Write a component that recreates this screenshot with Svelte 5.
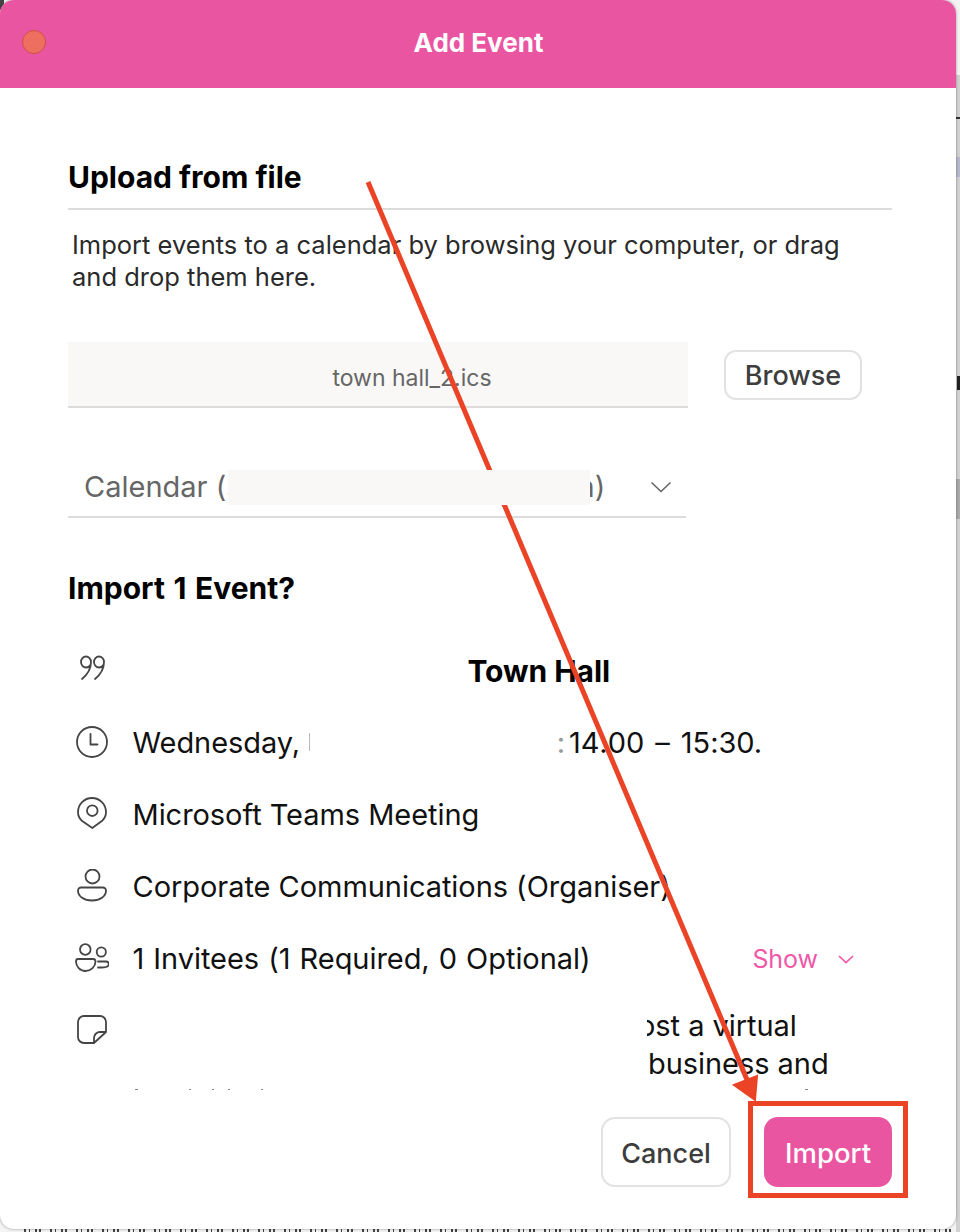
<script>
  const details = [
    { icon: "clock", text: "Wednesday,", rest: "14:00 – 15:30." },
    { icon: "pin", text: "Microsoft Teams Meeting" },
    { icon: "person", text: "Corporate Communications (Organiser)" },
  ];
</script>

<div class="page">
  <div class="window">
    <header class="titlebar">
      <span class="close"></span>
      <h1>Add Event</h1>
    </header>

    <main class="body">
      <h2 class="upload-title">Upload from file</h2>
      <p class="intro">Import events to a calendar by browsing your computer, or drag and drop them here.</p>

      <div class="file-row">
        <div class="file-name">town hall_2.ics</div>
        <button class="browse">Browse</button>
      </div>

      <div class="calendar">
        <span>Calendar (s</span>
        <span class="blur"></span>
        <span class="calendar-end">n)</span>
        <svg class="caret" width="22" height="12" viewBox="0 0 22 12" fill="none">
          <path d="M1.5 1.5 11 10.5 20.5 1.5" stroke="#666" stroke-width="1.6" />
        </svg>
      </div>

      <h2 class="import-title">Import 1 Event?</h2>

      <div class="rows">
        <div class="row">
          <svg class="icon" viewBox="0 0 34 34" fill="none" stroke="#454545" stroke-width="1.8" stroke-linecap="round">
            <path d="M16 9a5 5.500 0 1 0-5 5.500c2 0 3.500-1 4.300-2.500M16 9c0 7-3.500 12.500-9 17" />
            <path d="M29 9a5 5.500 0 1 0-5 5.500c2 0 3.500-1 4.300-2.500M29 9c0 7-3.500 12.500-9 17" />
          </svg>
          <strong class="event-title">Town Hall</strong>
        </div>

        {#each details as d}
          <div class="row">
            <svg class="icon" viewBox="0 0 34 34" fill="none" stroke="#454545" stroke-width="1.8" stroke-linecap="round" stroke-linejoin="round">
              {#if d.icon === "clock"}
                <circle cx="17" cy="17" r="15" />
                <path d="M15.500 9v10.500h7" />
              {:else if d.icon === "pin"}
                <path d="M17.300 31 6.800 23.700C4.300 21.500 3 18.500 3 15a14 14 0 0 1 28 0c0 3.500-1.300 6.500-3.800 8.700z" />
                <circle cx="17.300" cy="13.700" r="5.300" />
              {:else}
                <circle cx="17.500" cy="7.500" r="7" />
                <path d="M6 18.500h22a3 3 0 0 1 3 3c0 6-6 10-14 10s-14-4-14-10a3 3 0 0 1 3-3z" />
              {/if}
            </svg>
            <span>{d.text}</span>
            {#if d.rest}
              <span class="cut"></span>
              <span class="colon">:</span>
              <span class="time">{d.rest}</span>
            {/if}
          </div>
        {/each}

        <div class="row">
          <svg class="icon" viewBox="0 0 34 34" fill="none" stroke="#454545" stroke-width="1.8" stroke-linecap="round" stroke-linejoin="round">
            <circle cx="10.300" cy="8.500" r="5.300" />
            <path d="M3 18h15a2.500 2.500 0 0 1 2.500 2.500c0 5-4.500 9.500-10 9.500S1 25.500 1 20.500C1 19 1.800 18 3 18z" />
            <circle cx="26.300" cy="11" r="4.600" />
            <path d="M23 20.500h8a2.800 2.800 0 0 1 2.800 2.800c0 1.700-2.800 3.200-7.300 3.200h-3.500" />
          </svg>
          <span class="invitees">1 Invitees (1 Required, 0 Optional)</span>
          <span class="show">
            Show
            <svg width="16" height="9" viewBox="0 0 16 9" fill="none">
              <path d="M1 1 8 7.500 15 1" stroke="#f058a8" stroke-width="1.700" />
            </svg>
          </span>
        </div>

        <div class="row notes">
          <svg class="icon" viewBox="0 0 34 34" fill="none" stroke="#454545" stroke-width="1.8" stroke-linecap="round" stroke-linejoin="round">
            <path d="M19 30H9a6 6 0 0 1-6-6V9a6 6 0 0 1 6-6h16a6 6 0 0 1 6 6v10zM19 30v-5a6 6 0 0 1 6-6h6" />
          </svg>
          <div class="note-text">
            <div class="first">ost a virtual</div>
            <div class="second">business and</div>
          </div>
        </div>
      </div>

      <div class="clipped-line"></div>

      <footer class="actions">
        <button class="cancel">Cancel</button>
        <button class="import">Import</button>
      </footer>
    </main>
  </div>

  <!-- red markup drawn on top of the screenshot -->
  <svg class="markup" width="960" height="1232" viewBox="0 0 960 1232" fill="none">
    <path d="M368 182 748 1082" stroke="#ea4325" stroke-width="5" />
    <path d="M734 1085 757 1076 755 1100z" fill="#ea4325" stroke="#ea4325" stroke-width="2" />
    <rect x="750.500" y="1103.500" width="155" height="92" stroke="#ea4325" stroke-width="5" />
  </svg>
</div>

<style>
  :global(body) {
    margin: 0;
    background: #fff;
  }

  .page {
    position: relative;
    width: 960px;
    height: 1232px;
    overflow: hidden;
    font-family: Inter, "Liberation Sans", sans-serif;
    color: #111;
    background:
      linear-gradient(#444, #444) 0 0 / 4px 14px no-repeat,
      linear-gradient(#333, #333) 956px 117px / 4px 2px no-repeat,
      linear-gradient(#b9b9cc, #b9b9cc) 956px 157px / 4px 20px no-repeat,
      linear-gradient(#222, #222) 957px 376px / 3px 14px no-repeat,
      linear-gradient(#ababab, #ababab) 956px 479px / 4px 40px no-repeat,
      linear-gradient(#d2d2d2, #d2d2d2) 956px 75px / 4px 1157px no-repeat,
      repeating-linear-gradient(90deg, #444 0 2px, transparent 2px 5px, #444 5px 6px, transparent 6px 11px, #444 11px 13px, transparent 13px 15px, #444 15px 17px, transparent 17px 26px) 24px 1229px / 936px 3px no-repeat,
      #f4f4f4;
  }

  .window {
    width: 956px;
    height: 1229px;
    background: #fff;
    border-radius: 14px;
    overflow: hidden;
    box-shadow: 0 0 3px rgba(0, 0, 0, 0.4);
  }

  .titlebar {
    position: relative;
    height: 88px;
    background: #ea55a2;
    display: flex;
    align-items: center;
    justify-content: center;
  }

  .titlebar h1 {
    margin: 0 0 3px 1px;
    font-size: 26px;
    font-weight: 700;
    color: #fff;
  }

  .close {
    position: absolute;
    left: 22px;
    top: 30px;
    width: 24px;
    height: 24px;
    box-sizing: border-box;
    border-radius: 50%;
    background: #ee6f60;
    border: 1px solid #d04f45;
  }

  .body {
    position: relative;
    height: 1141px;
    box-sizing: border-box;
    padding: 71px 64px 0 68px;
  }

  .upload-title {
    margin: 0;
    height: 49px;
    font-size: 30px;
    line-height: 36px;
    font-weight: 700;
    color: #000;
    border-bottom: 2px solid #dcdcdc;
  }

  .intro {
    margin: 19px 0 0 4px;
    width: 790px;
    font-size: 25.5px;
    line-height: 32px;
    color: #2a2a2a;
  }

  .file-row {
    display: flex;
    align-items: center;
    margin-top: 49px;
  }

  .file-name {
    width: 620px;
    height: 64px;
    box-sizing: content-box;
    line-height: 72px;
    background: #f9f8f7;
    border-bottom: 2px solid #dcdcdc;
    text-align: center;
    font-size: 23px;
    color: #666;
    text-indent: 68px;
    margin-right: 36px;
  }

  button {
    font-family: inherit;
    box-sizing: border-box;
    border-radius: 12px;
    cursor: pointer;
  }

  .browse {
    width: 138px;
    height: 50px;
    background: #fff;
    border: 2px solid #e2e2e2;
    font-size: 27px;
    font-weight: 500;
    color: #3d3d3d;
    padding: 0;
  }

  .calendar {
    position: relative;
    display: flex;
    align-items: center;
    width: 602px;
    height: 59px;
    margin-top: 48px;
    padding: 1px 0 0 16px;
    border-bottom: 2px solid #dcdcdc;
    font-size: 29px;
    color: #666;
  }

  .blur {
    position: absolute;
    z-index: 2;
    left: 160px;
    top: 14px;
    width: 362px;
    height: 35px;
    background: #faf8f7;
  }

  .calendar-end {
    margin-left: 336px;
  }

  .caret {
    position: absolute;
    left: 582px;
    top: 25px;
  }

  .import-title {
    margin: 52px 0 0;
    font-size: 30px;
    line-height: 36px;
    font-weight: 700;
    word-spacing: 1.5px;
    color: #000;
  }

  .rows {
    margin-top: 28px;
  }

  .row {
    display: flex;
    align-items: center;
    height: 72px;
    font-size: 29px;
    letter-spacing: -0.05px;
    color: #111;
  }

  .icon {
    flex: none;
    width: 34px;
    height: 34px;
    margin: 0 23.5px 0 7px;
  }

  /* the date was wiped out of the screenshot, only a sliver of it is left */
  .cut {
    flex: none;
    width: 256.5px;
    height: 30px;
    background: linear-gradient(#bbb, #bbb) 9px 50% / 1px 18px no-repeat;
  }

  .colon {
    color: #999;
    margin-right: 4px;
  }

  .time {
    word-spacing: 3px;
  }

  .invitees {
    word-spacing: 1px;
  }

  .event-title {
    flex: 1;
    text-align: center;
    font-size: 30px;
    font-weight: 700;
    color: #000;
    margin: 2px -53px 0 0;
  }

  .show {
    display: flex;
    align-items: center;
    gap: 20px;
    margin: 2px 38px 0 auto;
    font-size: 25px;
    color: #f058a8;
  }

  .notes {
    align-items: flex-start;
    height: 90px;
    overflow: hidden;
    margin-top: 13px;
  }

  .notes .icon {
    margin-top: 6px;
  }

  .note-text {
    margin-left: 514.5px;
    width: 200px;
    overflow: hidden;
    white-space: nowrap;
    line-height: 38px;
  }

  .first {
    margin-left: -9px;
  }

  .second {
    margin-left: 1px;
  }

  /* tips of the next text line, cut off by the scroll area */
  .clipped-line {
    position: absolute;
    left: 0;
    top: 1001px;
    width: 100%;
    height: 1px;
    background:
      linear-gradient(#888, #888) 135px 0 / 3px 1px no-repeat,
      linear-gradient(#888, #888) 189px 0 / 2px 1px no-repeat,
      linear-gradient(#888, #888) 212px 0 / 2px 1px no-repeat,
      linear-gradient(#888, #888) 228px 0 / 2px 1px no-repeat,
      linear-gradient(#888, #888) 261px 0 / 2px 1px no-repeat,
      linear-gradient(#888, #888) 805px 0 / 3px 1px no-repeat;
  }

  .actions {
    position: absolute;
    right: 64px;
    bottom: 42px;
    display: flex;
    gap: 33px;
  }

  .cancel {
    width: 130px;
    height: 70px;
    padding: 3px 0 0;
    background: #fff;
    border: 2px solid #e2e2e2;
    border-radius: 14px;
    font-size: 27px;
    font-weight: 500;
    color: #3d3d3d;
  }

  .import {
    width: 128px;
    height: 70px;
    padding: 1px 0 0;
    background: #ea55a2;
    border: none;
    border-radius: 14px;
    font-size: 27.5px;
    font-weight: 500;
    color: #fff;
  }

  .markup {
    position: absolute;
    z-index: 1;
    left: 0;
    top: 0;
    pointer-events: none;
  }
</style>
